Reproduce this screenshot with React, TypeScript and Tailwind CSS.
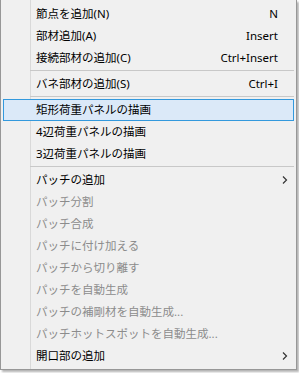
const font = {
  fontFamily: '"Noto Sans", "Noto Sans CJK JP", sans-serif',
};

type Item =
  | { type: "sep" }
  | {
      type?: "item";
      label: string;
      shortcut?: string;
      disabled?: boolean;
      active?: boolean;
      submenu?: boolean;
    };

const menuItems: Item[] = [
  { label: "節点を追加(N)", shortcut: "N" },
  { label: "部材追加(A)", shortcut: "Insert" },
  { label: "接続部材の追加(C)", shortcut: "Ctrl+Insert" },
  { type: "sep" },
  { label: "バネ部材の追加(S)", shortcut: "Ctrl+I" },
  { type: "sep" },
  { label: "矩形荷重パネルの描画", active: true },
  { label: "4辺荷重パネルの描画" },
  { label: "3辺荷重パネルの描画" },
  { type: "sep" },
  { label: "パッチの追加", submenu: true },
  { label: "パッチ分割", disabled: true },
  { label: "パッチ合成", disabled: true },
  { label: "パッチに付け加える", disabled: true },
  { label: "パッチから切り離す", disabled: true },
  { label: "パッチを自動生成", disabled: true },
  { label: "パッチの補剛材を自動生成...", disabled: true },
  { label: "パッチホットスポットを自動生成...", disabled: true },
  { label: "開口部の追加", submenu: true },
];

function Chevron() {
  return (
    <svg width="6" height="8" viewBox="0 0 6 8" className="text-[#333]">
      <path d="M1 0.5 L4.5 4 L1 7.5" fill="none" stroke="currentColor" strokeWidth="1.2" />
    </svg>
  );
}

export default function App() {
  return (
    <div className="h-[373px] w-[299px] bg-white" style={font}>
      <div className="relative w-[297px] border-x border-b border-[#979797] bg-[#f0f0f0] px-[2px] pb-[2px] pt-[3px] text-[11.5px] shadow-[2px_2px_2px_rgba(0,0,0,0.3)]">
        <div className="absolute bottom-0 left-[29px] top-0 w-px bg-[#d9d9d9]" />
        {menuItems.map((item, i) =>
          item.type === "sep" ? (
            <div key={i} className="relative flex h-[4px] items-start pl-[27px] pt-[1px]">
              <div className="h-px w-full bg-[#c8c8c8]" />
            </div>
          ) : (
            <div
              key={i}
              className={`relative flex h-[22px] items-center pl-[32px] pr-[15px] ${
                item.active ? "border border-[#3399dd] bg-[#dbe9f8]" : "border border-transparent"
              } ${item.disabled ? "text-[#8c8c8c]" : "text-black"}`}
            >
              <span className="flex-1 whitespace-nowrap leading-none">{item.label}</span>
              {item.shortcut && <span className="whitespace-nowrap leading-none">{item.shortcut}</span>}
              {item.submenu && (
                <span className="-mr-[10px] flex items-center">
                  <Chevron />
                </span>
              )}
            </div>
          )
        )}
      </div>
    </div>
  );
}
